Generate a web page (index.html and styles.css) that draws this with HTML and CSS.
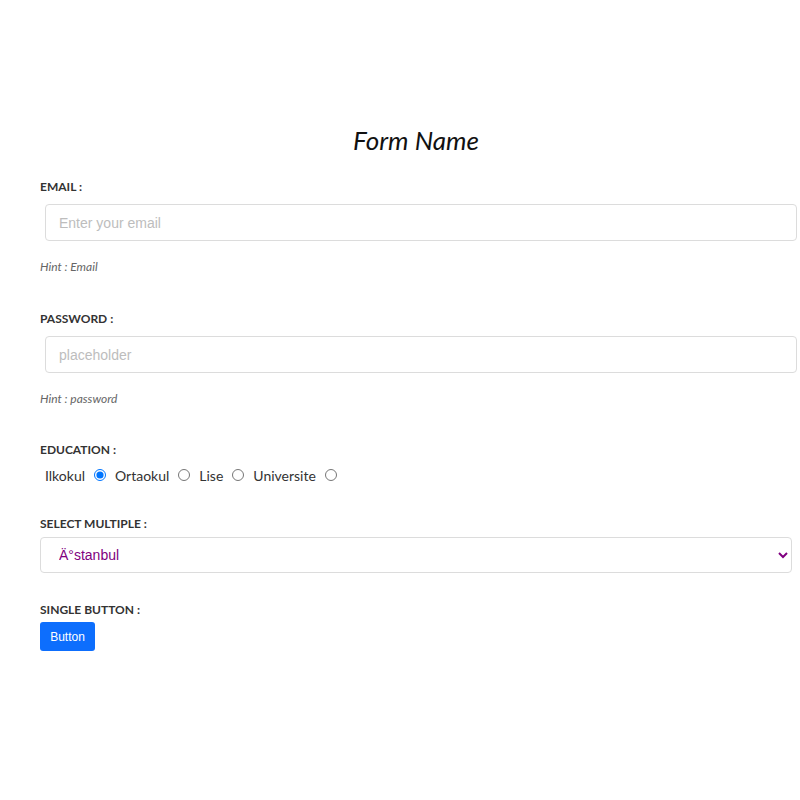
FILE: index.html
```html
<!DOCTYPE html>
<html>
<head>
<meta charset="utf-8">
<link rel="stylesheet" href="styles.css">
</head>
<body>
<form class="form">
  <h1 class="title">Form Name</h1>
  <div class="group">
    <label class="label">EMAIL :</label>
    <input class="field" type="text" placeholder="Enter your email">
    <div class="hint">Hint : Email</div>
  </div>
  <div class="group group-pass">
    <label class="label">PASSWORD :</label>
    <input class="field" type="password" placeholder="placeholder">
    <div class="hint">Hint : password</div>
  </div>
  <div class="group">
    <label class="label">EDUCATION :</label>
    <div class="radios">
      <span class="opt">Ilkokul</span><input class="radio" type="radio" name="edu" checked>
      <span class="opt">Ortaokul</span><input class="radio" type="radio" name="edu">
      <span class="opt">Lise</span><input class="radio" type="radio" name="edu">
      <span class="opt">Universite</span><input class="radio" type="radio" name="edu">
    </div>
  </div>
  <div class="group group-select">
    <label class="label">SELECT MULTIPLE :</label>
    <select class="select">
      <option>Ä°stanbul</option>
    </select>
  </div>
  <div class="group group-button">
    <label class="label">SINGLE BUTTON :</label>
    <button class="btn" type="button">Button</button>
  </div>
</form>
</body>
</html>
```
FILE: styles.css
```css
html, body {
  margin: 0;
  padding: 0;
  background: #fff;
}
body {
  font-family: Lato, "Open Sans", sans-serif;
  width: 800px;
  height: 800px;
  overflow: hidden;
}
.form {
  width: 752px;
  margin: 0 0 0 40px;
  padding-top: 125px;
  display: flex;
  flex-direction: column;
}
.title {
  margin: 0 0 24px 0;
  font-family: Lato, sans-serif;
  font-style: italic;
  font-weight: 400;
  font-size: 26px;
  line-height: 30px;
  text-align: center;
  color: #111;
}
.group {
  display: flex;
  flex-direction: column;
  align-items: flex-start;
  margin-bottom: 36px;
}
.group-pass {
  margin-bottom: 35px;
}
.label {
  font-family: Lato, sans-serif;
  font-weight: 700;
  font-size: 12px;
  line-height: 16px;
  color: #333;
  letter-spacing: 0;
}
.field {
  box-sizing: border-box;
  margin: 9px 0 0 5px;
  width: 752px;
  height: 37px;
  border: 1px solid #dcdcdc;
  border-radius: 4px;
  padding: 0 13px;
  font-family: "Liberation Sans", Arial, sans-serif;
  font-size: 14px;
  color: #333;
  outline: none;
}
.field::placeholder {
  color: #bdbdbd;
}
.hint {
  margin-top: 18px;
  font-family: Lato, sans-serif;
  font-style: italic;
  font-size: 12px;
  line-height: 16px;
  color: #666;
}
.radios {
  margin: 7px 0 0 5px;
  display: flex;
  align-items: center;
  height: 20px;
  font-family: Lato, sans-serif;
  font-size: 14px;
  color: #333;
}
.radio {
  margin: 0 9px 0 9px;
  width: 12px;
  height: 12px;
}
.group-select {
  margin-top: -5px;
  margin-bottom: 29px;
}
.group-select .label {
  margin-bottom: 5px;
}
.group-button .label {
  margin-bottom: 4px;
}
.select {
  box-sizing: border-box;
  width: 752px;
  height: 36px;
  border: 1px solid #dcdcdc;
  border-radius: 4px;
  padding: 0 10px 0 14px;
  background: #fff;
  font-family: "Liberation Sans", Arial, sans-serif;
  font-size: 14px;
  color: #800080;
  outline: none;
}
.btn {
  box-sizing: border-box;
  height: 29px;
  width: 55px;
  border: none;
  border-radius: 3px;
  background: #0d6efd;
  color: #fff;
  font-family: "Liberation Sans", Arial, sans-serif;
  font-size: 12px;
  padding: 0;
}
```
